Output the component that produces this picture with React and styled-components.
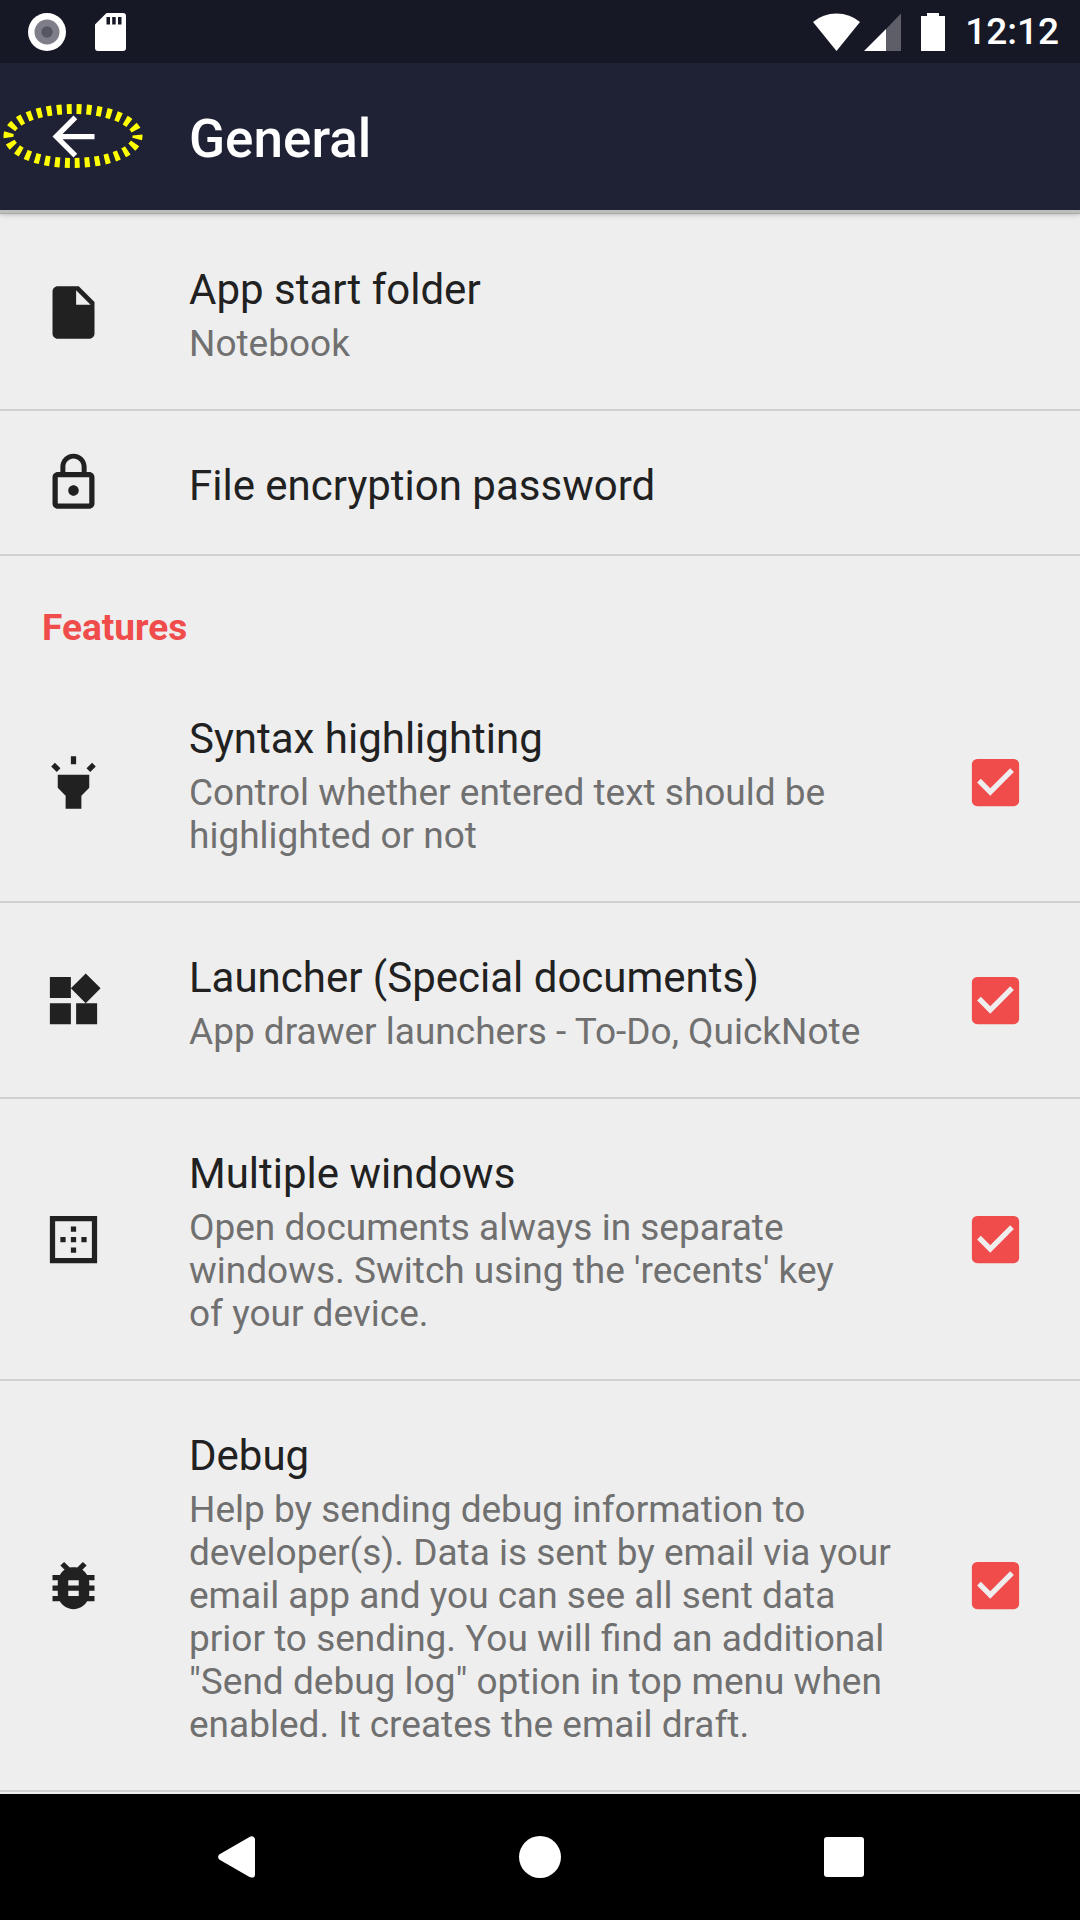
import React, { useState } from "react";
import styled, { createGlobalStyle, css } from "styled-components";
import {
  MdArrowBack,
  MdBorderOuter,
  MdBugReport,
  MdCheckBox,
  MdHighlight,
  MdInsertDriveFile,
  MdLockOutline,
  MdWidgets,
} from "react-icons/md";

const GlobalStyle = createGlobalStyle`
  *, *::before, *::after { box-sizing: border-box; }
  body { margin: 0; background: #eeeeee; }
  button { border: 0; background: none; padding: 0; font: inherit; color: inherit; cursor: pointer; }
`;

const Screen = styled.div`
  display: flex;
  flex-direction: column;
  min-height: 100vh;
  font-family: Roboto, "Noto Sans", sans-serif;
  color: #212121;
  background: #eeeeee;
`;

const StatusBar = styled.div`
  display: flex;
  align-items: center;
  justify-content: space-between;
  height: 63px;
  padding: 0 21px 0 28px;
  background: #171826;
  color: #ffffff;
`;

const StatusGroup = styled.div`
  display: flex;
  align-items: center;
  gap: ${(p) => p.$gap}px;
  svg { display: block; }
`;

const Clock = styled.time`
  font-size: 37px;
  line-height: 43px;
  font-weight: 500;
`;

const Toolbar = styled.header`
  position: relative;
  display: flex;
  align-items: center;
  height: 147px;
  background: #1f2135;
  color: #ffffff;
  box-shadow: 0 3px 0 #bdbdbd, 0 4px 0 #a9a9a9, 0 4px 5px rgba(0, 0, 0, 0.3);
`;

const BackButton = styled.button`
  position: relative;
  display: grid;
  place-items: center;
  width: 147px;
  height: 147px;
`;

const FocusRing = styled.svg`
  position: absolute;
  inset: 0;
`;

const Title = styled.h1`
  margin: 0;
  padding: 4px 0 0 42px;
  font-size: 53px;
  line-height: 62px;
  font-weight: 500;
`;

const Settings = styled.main`
  flex: 1;
  padding-top: 5px;
`;

const rowStyle = css`
  display: flex;
  align-items: center;
  width: 100%;
  padding: 0 53px 0 42px;
  border-bottom: 2px solid #d0d0d0;
  text-align: left;
  cursor: pointer;
  > svg { flex: none; }
`;

const ActionRow = styled.button`
  && {
    ${rowStyle}
  }
`;

const ToggleRow = styled.label`
  ${rowStyle}
`;

const RowText = styled.span`
  display: flex;
  flex: 1;
  flex-direction: column;
  gap: 8px;
  padding: 50px 64px 44px 84px;
`;

const RowTitle = styled.span`
  font-size: 42px;
  line-height: 49px;
`;

const Summary = styled.span`
  font-size: 37px;
  line-height: 43px;
  color: #707070;
`;

const SectionTitle = styled.h2`
  margin: 0;
  padding: 50px 42px 15px;
  font-size: 37px;
  line-height: 43px;
  font-weight: 700;
  color: #f04c4b;
`;

const CheckCell = styled.span`
  display: grid;
  flex: none;
  width: 63px;
  height: 63px;
  color: ${(p) => (p.$on ? "#f04c4b" : "#757575")};
  > * { grid-area: 1 / 1; }
`;

const CheckInput = styled.input`
  appearance: none;
  width: 63px;
  height: 63px;
  margin: 0;
  cursor: pointer;
`;

const NavBar = styled.nav`
  display: flex;
  height: 126px;
  padding: 0 84px;
  background: #000000;
`;

const NavButton = styled.button`
  display: grid;
  flex: 1;
  place-items: center;
`;

const RecordIcon = () => (
  <svg width="38" height="38" viewBox="0 0 38 38" aria-hidden="true">
    <circle cx="19" cy="19" r="19" fill="#fff" />
    <circle cx="19" cy="19" r="12.5" fill="#7d7e87" />
    <circle cx="19" cy="19" r="5.7" fill="#555661" />
  </svg>
);

const SdCardIcon = () => (
  <svg width="31" height="38" viewBox="0 0 31 38" aria-hidden="true">
    <path
      fill="#fff"
      fillRule="evenodd"
      d="M11.500 0H28a3 3 0 0 1 3 3v32a3 3 0 0 1-3 3H3a3 3 0 0 1-3-3V11.500zM11.500 4v7.500h3.500V4zM17.200 4v7.500h3.500V4zM23 4v7.500h3.500V4z"
    />
  </svg>
);

const WifiIcon = () => (
  <svg width="47" height="38" viewBox="0 0 47 38" aria-hidden="true">
    <path fill="#fff" d="M23.500 38 0 9Q10 0.500 23.500 0.500T47 9z" />
  </svg>
);

const SignalIcon = () => (
  <svg width="37" height="38" viewBox="0 0 37 38" aria-hidden="true">
    <path fill="#5d5e68" d="M37 0.500V38H22V16z" />
    <path fill="#fff" d="M22 16V38H0z" />
  </svg>
);

const BatteryIcon = () => (
  <svg width="24" height="38" viewBox="0 0 24 38" aria-hidden="true">
    <path fill="#fff" d="M6 0H18V3H24V38H0V3H6z" />
  </svg>
);

function Toggle({ icon: Icon, title, summary }) {
  const [on, setOn] = useState(true);
  return (
    <ToggleRow>
      <Icon size={63} aria-hidden="true" />
      <RowText>
        <RowTitle>{title}</RowTitle>
        <Summary>{summary}</Summary>
      </RowText>
      <CheckCell $on={on}>
        <MdCheckBox size={63} aria-hidden="true" />
        <CheckInput type="checkbox" checked={on} onChange={(e) => setOn(e.target.checked)} />
      </CheckCell>
    </ToggleRow>
  );
}

function Action({ icon: Icon, title, summary }) {
  return (
    <ActionRow type="button">
      <Icon size={63} aria-hidden="true" />
      <RowText>
        <RowTitle>{title}</RowTitle>
        {summary && <Summary>{summary}</Summary>}
      </RowText>
    </ActionRow>
  );
}

const features = [
  {
    icon: MdHighlight,
    title: "Syntax highlighting",
    summary: "Control whether entered text should be highlighted or not",
  },
  {
    icon: MdWidgets,
    title: "Launcher (Special documents)",
    summary: "App drawer launchers - To-Do, QuickNote",
  },
  {
    icon: MdBorderOuter,
    title: "Multiple windows",
    summary:
      "Open documents always in separate windows. Switch using the 'recents' key of\u00a0your device.",
  },
  {
    icon: MdBugReport,
    title: "Debug",
    summary:
      'Help by sending debug information to developer(s). Data is sent by email via your email app and you can see all sent data prior to sending. You will find an additional "Send debug log" option in top menu when enabled. It creates the email draft.',
  },
];

export default function App() {
  return (
    <Screen>
      <GlobalStyle />
      <StatusBar>
        <StatusGroup $gap={29}>
          <RecordIcon />
          <SdCardIcon />
        </StatusGroup>
        <StatusGroup $gap={20}>
          <StatusGroup $gap={4}>
            <WifiIcon />
            <SignalIcon />
          </StatusGroup>
          <BatteryIcon />
          <Clock>12:12</Clock>
        </StatusGroup>
      </StatusBar>
      <Toolbar>
        <BackButton type="button" aria-label="Back">
          <MdArrowBack size={63} aria-hidden="true" />
          <FocusRing width="147" height="147" viewBox="0 0 147 147" aria-hidden="true">
            <ellipse
              cx="73"
              cy="73"
              rx="64.5"
              ry="27"
              fill="none"
              stroke="#ffff00"
              strokeWidth="10"
              strokeDasharray="5 5"
              strokeDashoffset="2"
            />
          </FocusRing>
        </BackButton>
        <Title>General</Title>
      </Toolbar>
      <Settings>
        <Action icon={MdInsertDriveFile} title="App start folder" summary="Notebook" />
        <Action icon={MdLockOutline} title="File encryption password" />
        <SectionTitle>Features</SectionTitle>
        {features.map((f) => (
          <Toggle key={f.title} {...f} />
        ))}
      </Settings>
      <NavBar>
        <NavButton type="button" aria-label="Back">
          <svg width="37" height="42" viewBox="0 0 37 42" aria-hidden="true">
            <path
              fill="#fff"
              d="M1.200 18.500 31.500 1Q33.500 0 35 0.500T37 3V39Q36.500 41.500 35 41.500T31.500 41L1.200 23.500Q-1 21 1.200 18.500z"
            />
          </svg>
        </NavButton>
        <NavButton type="button" aria-label="Home">
          <svg width="42" height="42" viewBox="0 0 42 42" aria-hidden="true">
            <circle cx="21" cy="21" r="21" fill="#fff" />
          </svg>
        </NavButton>
        <NavButton type="button" aria-label="Recent apps">
          <svg width="40" height="40" viewBox="0 0 40 40" aria-hidden="true">
            <rect width="40" height="40" rx="3" fill="#fff" />
          </svg>
        </NavButton>
      </NavBar>
    </Screen>
  );
}
